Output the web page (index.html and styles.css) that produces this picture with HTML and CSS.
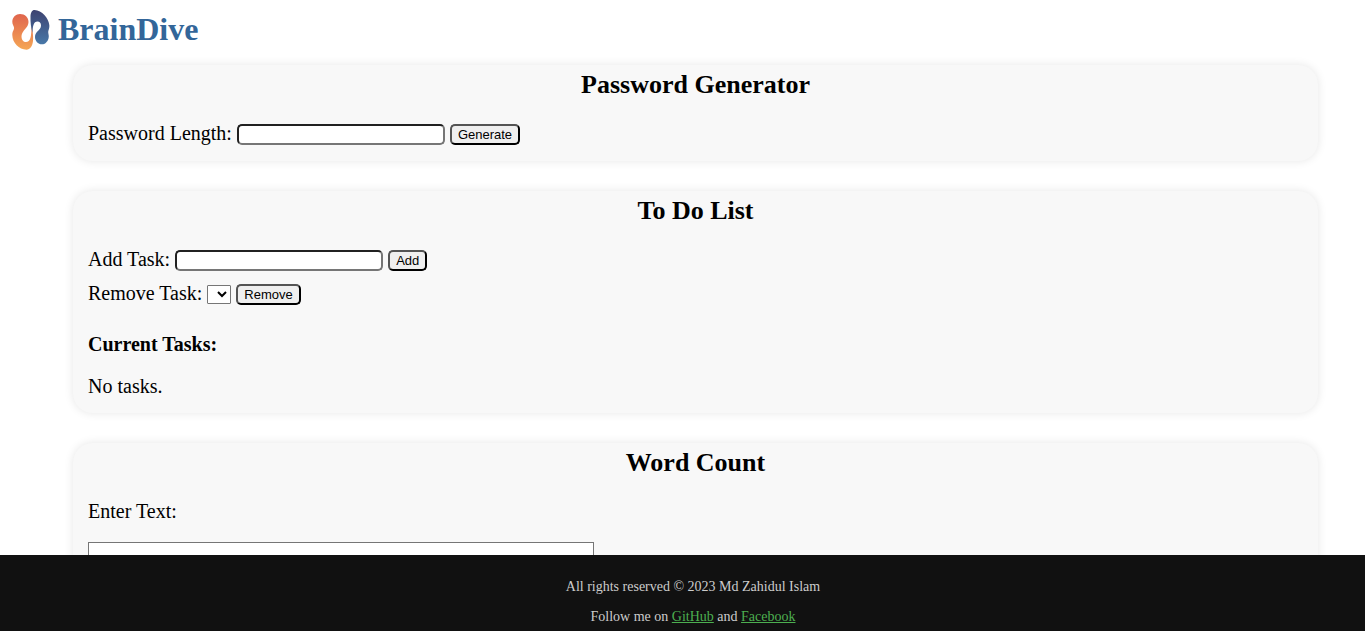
FILE: index.html
```html
<!DOCTYPE html>
<html lang="en">
<head>
<meta charset="utf-8">
<title>BrainDive</title>
<link rel="stylesheet" href="styles.css">
</head>
<body>
<header class="header">
  <svg class="logo" viewBox="0 0 40 40" aria-hidden="true">
    <defs>
      <linearGradient id="warm" x1="0" y1="0" x2="0" y2="1"><stop offset="0" stop-color="#e0654d"/><stop offset="1" stop-color="#f5a655"/></linearGradient>
      <linearGradient id="cool" x1="0" y1="0" x2="0" y2="1"><stop offset="0" stop-color="#3d4270"/><stop offset="1" stop-color="#4878a8"/></linearGradient>
    </defs>
    <path fill="url(#warm)" d="M9 4C14 4 17.5 7.500 17.500 12C17.500 18 11 20 10.500 26C10.500 30 12.500 32 15 32C19.500 32 20.500 27 20.500 15C21.500 20 22.500 26 22 31C21.500 36 19 39.700 15.500 39.700C8 39.500 1.500 33 1.300 25C1.200 21 3.300 20 3 17.500C2.800 15.500 1.200 14.500 1.300 11.500C1.500 7 5 4 9 4Z"/>
    <path fill="url(#cool)" d="M23.500 0C31 0.500 37.500 8 38.300 15C38.700 19 37 20 37.300 23C37.500 25 38.200 26 37.500 28.500C36.500 32 34 34.300 31 34.300C27 34.300 24 31 24 27C24 21 30 20.500 30 15.500C30 13 28.500 11.500 26.500 11.500C22.500 11.500 21.800 16 21.500 23C20 18 19.300 12 19.500 6.500C19.700 2.500 21 0 23.500 0Z"/>
  </svg>
  <h1 class="brand">BrainDive</h1>
</header>
<main class="tools">
  <section class="card">
    <h2 class="card-title">Password Generator</h2>
    <div class="row">
      <label for="length">Password Length:</label>
      <input class="field" id="length" type="text">
      <button class="button" type="button">Generate</button>
    </div>
  </section>
  <section class="card">
    <h2 class="card-title">To Do List</h2>
    <div class="row">
      <label for="task">Add Task:</label>
      <input class="field" id="task" type="text">
      <button class="button" type="button">Add</button>
    </div>
    <div class="row">
      <label for="remove">Remove Task:</label>
      <select class="picker" id="remove"></select>
      <button class="button" type="button">Remove</button>
    </div>
    <h3 class="subtitle">Current Tasks:</h3>
    <p class="tasks">No tasks.</p>
  </section>
  <section class="card">
    <h2 class="card-title">Word Count</h2>
    <div class="row"><label for="text">Enter Text:</label></div>
    <textarea class="text-area" id="text"></textarea>
  </section>
</main>
<footer class="footer">
  <p class="footer-line">All rights reserved © 2023 Md Zahidul Islam</p>
  <p class="footer-line">Follow me on <a class="link" href="#">GitHub</a> and <a class="link" href="#">Facebook</a></p>
</footer>
</body>
</html>
```
FILE: styles.css
```css
* { box-sizing: border-box; }
body {
  margin: 0;
  background: #fff;
  color: #000;
  font-family: "Liberation Serif", "Times New Roman", serif;
  font-size: 20px;
}
html { scrollbar-width: none; }
.header {
  display: flex;
  align-items: flex-start;
  gap: 7px;
  padding: 10px 11px 0;
}
.logo { width: 40px; height: 40px; }
.brand {
  margin: 0;
  color: #336699;
  font-size: 32px;
  line-height: 38px;
}
.tools {
  display: flex;
  flex-direction: column;
  gap: 30px;
  padding: 15px 47px 100px 73px;
}
.card {
  padding: 4px 15px 10px;
  border-radius: 20px;
  background: #f8f8f8;
  box-shadow: 0 0 10px rgba(0, 0, 0, 0.1);
}
.card-title {
  margin: 0 0 14px;
  font-size: 26px;
  line-height: 32px;
  text-align: center;
}
.row {
  display: flex;
  align-items: center;
  gap: 5px;
  height: 36px;
}
.row + .row { height: 32px; }
.field,
.button,
.picker { margin: 2px 0 0; }
.field {
  width: 208px;
  height: 21px;
  border: 2px inset #767676;
  border-radius: 5px;
  padding: 1px 2px;
  background: #fff;
}
.button {
  height: 21px;
  border: 2px outset #000;
  border-radius: 5px;
  padding: 0 6px;
  background: #efefef;
  color: #000;
  font: 13px "Liberation Sans", Arial, sans-serif;
}
.picker {
  width: 24px;
  height: 19px;
  border: 1px solid #767676;
  border-radius: 1px;
  background: #fff;
}
.subtitle {
  margin: 24px 0 20px;
  font-size: 20px;
  line-height: 22px;
}
.tasks { margin: 0 0 6px; line-height: 22px; }
.text-area {
  display: block;
  width: 506px;
  height: 150px;
  margin-top: 13px;
  border: 1px solid #767676;
}
.footer {
  position: fixed;
  right: 0;
  bottom: 0;
  left: 0;
  display: flex;
  flex-direction: column;
  gap: 14px;
  padding: 24px 0 6px 21px;
  background: #111;
  color: #ccc;
  font-size: 14px;
  line-height: 16px;
  text-align: center;
}
.footer-line { margin: 0; }
.link { color: #4caf50; }
```
